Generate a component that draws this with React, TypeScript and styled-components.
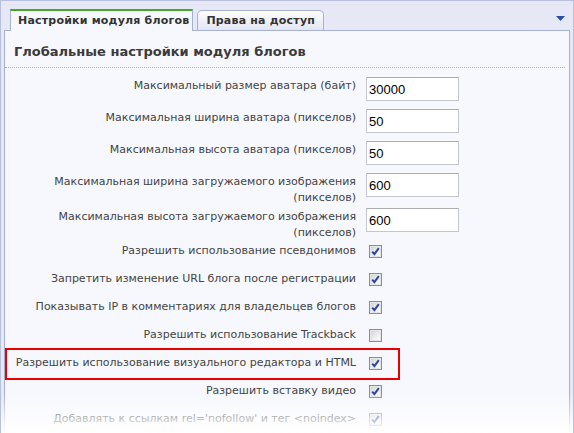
import React from "react";
import styled, { createGlobalStyle } from "styled-components";

const GlobalStyle = createGlobalStyle`
  html, body {
    margin: 0;
    padding: 0;
    background: #ffffff;
  }
  body {
    font-family: "DejaVu Sans", Verdana, sans-serif;
  }
`;

const Frame = styled.div`
  position: relative;
  width: 574px;
  height: 433px;
  box-sizing: border-box;
  border: 1px solid #b8c0dd;
  border-bottom: none;
  background: #e6e9f5;
  display: flex;
  flex-direction: column;
  overflow: hidden;
`;

const TabBar = styled.div`
  position: relative;
  z-index: 1;
  flex-shrink: 0;
  height: 29px;
  display: flex;
  align-items: flex-end;
  gap: 4px;
  padding-left: 9px;
`;

const Tab = styled.div<{ $active?: boolean }>`
  box-sizing: border-box;
  display: flex;
  align-items: center;
  font-weight: bold;
  font-size: 11px;
  letter-spacing: 0.2px;
  color: #333;
  white-space: nowrap;
  border: 1px solid #a6b0d5;
  border-bottom: none;
  ${({ $active }) =>
    $active
      ? `
    height: 22px;
    margin-bottom: -1px;
    padding: 0 3px 1px 7px;
    border-top: 2px solid #45a82b;
    background: #f7f8fd;
  `
      : `
    height: 20px;
    padding: 0 8px 0 8px;
    border-radius: 5px 5px 0 0;
    background: linear-gradient(#fdfdfe, #e3e6f2);
  `}
`;

const MenuArrow = styled.svg`
  margin-left: auto;
  margin-right: 8px;
  align-self: center;
  margin-top: 6px;
`;

const Panel = styled.div`
  flex: 1;
  min-height: 0;
  overflow: hidden;
  margin: 0 3px;
  border: 1px solid #a6b0d5;
  border-bottom: none;
  background: #f7f8fd;
`;

const Title = styled.h2`
  margin: 0 4px 0 0;
  padding: 11px 0 5px 9px;
  font-size: 13px;
  line-height: 20px;
  font-weight: bold;
  color: #3a3a3a;
  border-bottom: 1px dotted #a9acb6;
`;

const Form = styled.div`
  padding-top: 9px;
  display: flex;
  flex-direction: column;
`;

const Row = styled.div<{ $kind: "input" | "check"; $highlight?: boolean }>`
  position: relative;
  display: grid;
  grid-template-columns: 351px 1fr;
  column-gap: 10px;
  align-items: start;
  min-height: ${({ $kind }) => ($kind === "input" ? "32px" : "28px")};
  ${({ $highlight }) =>
    $highlight &&
    `
    &::after {
      content: "";
      position: absolute;
      left: 0;
      top: -7px;
      width: 395px;
      height: 32px;
      box-sizing: border-box;
      border: 2px solid #e60000;
    }
  `}
`;

const Label = styled.label<{ $kind: "input" | "check" }>`
  text-align: right;
  font-size: 11px;
  line-height: 16px;
  color: #444;
  margin-top: ${({ $kind }) => ($kind === "input" ? "1px" : "0")};
  padding-bottom: 2px;
`;

const TextInput = styled.input`
  box-sizing: border-box;
  width: 93px;
  height: 24px;
  padding: 0 2px;
  border: 1px solid #c3c6d0;
  border-top-color: #abadb3;
  background: #fff;
  font-family: "Liberation Sans", Arial, sans-serif;
  font-size: 13px;
  color: #000;
  outline: none;
`;

const CheckBox = styled.span`
  box-sizing: border-box;
  width: 13px;
  height: 13px;
  margin: 2px 0 0 3px;
  display: inline-flex;
  align-items: center;
  justify-content: center;
  border: 1px solid #8e8f8f;
  background: linear-gradient(135deg, #d2d2d4 0%, #f4f4f6 70%, #fdfdfd 100%);
  box-shadow: inset 0 0 0 1px #e4e4e6;
`;

const Fade = styled.div`
  position: absolute;
  left: 0;
  right: 0;
  bottom: 0;
  height: 40px;
  background: linear-gradient(rgba(255, 255, 255, 0), #ffffff);
  pointer-events: none;
`;

type Setting =
  | { kind: "input"; label: string; value: string }
  | { kind: "check"; label: string; checked: boolean; highlight?: boolean };

const settings: Setting[] = [
  { kind: "input", label: "Максимальный размер аватара (байт)", value: "30000" },
  { kind: "input", label: "Максимальная ширина аватара (пикселов)", value: "50" },
  { kind: "input", label: "Максимальная высота аватара (пикселов)", value: "50" },
  {
    kind: "input",
    label: "Максимальная ширина загружаемого изображения (пикселов)",
    value: "600",
  },
  {
    kind: "input",
    label: "Максимальная высота загружаемого изображения (пикселов)",
    value: "600",
  },
  { kind: "check", label: "Разрешить использование псевдонимов", checked: true },
  { kind: "check", label: "Запретить изменение URL блога после регистрации", checked: true },
  { kind: "check", label: "Показывать IP в комментариях для владельцев блогов", checked: true },
  { kind: "check", label: "Разрешить использование Trackback", checked: false },
  {
    kind: "check",
    label: "Разрешить использование визуального редактора и HTML",
    checked: true,
    highlight: true,
  },
  { kind: "check", label: "Разрешить вставку видео", checked: true },
  {
    kind: "check",
    label: "Добавлять к ссылкам rel='nofollow' и тег <noindex>",
    checked: true,
  },
];

function Check({ checked }: { checked: boolean }) {
  return (
    <CheckBox>
      {checked && (
        <svg width="9" height="9" viewBox="0 0 9 9">
          <path d="M1.2 4.6 L3.4 7.2 L7.8 1.2" fill="none" stroke="#2a45a3" strokeWidth="2" />
        </svg>
      )}
    </CheckBox>
  );
}

export default function App() {
  return (
    <>
      <GlobalStyle />
      <Frame>
        <TabBar>
          <Tab $active>Настройки модуля блогов</Tab>
          <Tab>Права на доступ</Tab>
          <MenuArrow width="9" height="5" viewBox="0 0 9 5">
            <polygon points="0,0 9,0 4.5,5" fill="#2b4ca8" />
          </MenuArrow>
        </TabBar>
        <Panel>
          <Title>Глобальные настройки модуля блогов</Title>
          <Form>
            {settings.map(setting => (
              <Row
                key={setting.label}
                $kind={setting.kind}
                $highlight={setting.kind === "check" && setting.highlight}
              >
                <Label $kind={setting.kind}>{setting.label}</Label>
                {setting.kind === "input" ? (
                  <TextInput defaultValue={setting.value} />
                ) : (
                  <Check checked={setting.checked} />
                )}
              </Row>
            ))}
          </Form>
        </Panel>
        <Fade />
      </Frame>
    </>
  );
}
